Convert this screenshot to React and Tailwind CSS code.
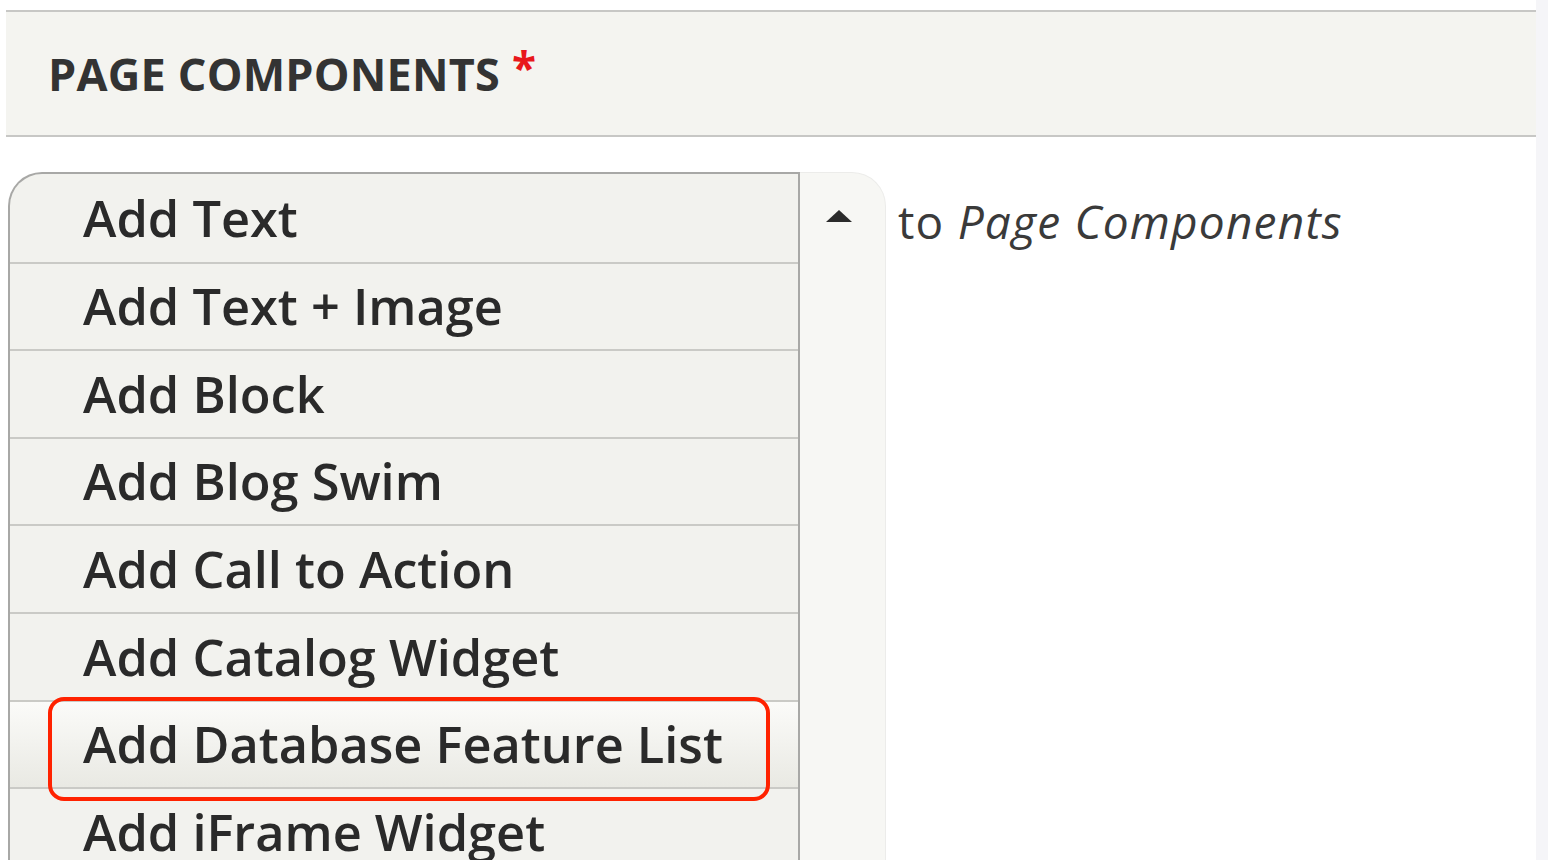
const items = [
  'Add Text',
  'Add Text + Image',
  'Add Block',
  'Add Blog Swim',
  'Add Call to Action',
  'Add Catalog Widget',
  'Add Database Feature List',
  'Add iFrame Widget',
];

function DropButton() {
  return (
    <div className="relative flex">
      <ul className="w-[792px] overflow-hidden rounded-tl-[34px] border-l-2 border-r-2 border-t-2 border-[#a8a8a6] bg-[#f2f2ee]">
        {items.map((label, i) => (
          <li
            key={label}
            className={`flex h-[87.6px] items-center pl-[73px] text-[50.5px] font-semibold leading-none text-[#2a2a2a] ${
              i > 0 ? 'border-t-2 border-[#cacac6]' : ''
            } ${i === 6 ? 'bg-gradient-to-b from-[#fbfbf9] to-[#e9e9e3]' : ''}`}
          >
            {label}
          </li>
        ))}
      </ul>
      <div className="flex w-[86px] justify-center rounded-tr-[34px] border-r border-t border-[#ececea] bg-[#f7f7f4] pl-0 pr-[8px] pt-[37px]">
        <div className="h-0 w-0 border-x-[13px] border-b-[12px] border-x-transparent border-b-[#2b2b2b]" />
      </div>
      <div className="pointer-events-none absolute left-[40px] top-[525px] h-[104px] w-[722px] rounded-[16px] border-4 border-[#ff2200]" />
    </div>
  );
}

export default function App() {
  return (
    <div className="flex h-[860px] overflow-hidden bg-white font-['Open_Sans',sans-serif]">
      <div className="flex-1 pl-[6px] pt-[10px]">
        <div className="flex h-[127px] items-center border-y-2 border-[#c7c7c5] bg-[#f4f4f0] pl-[42px]">
          <span className="text-[45px] font-bold tracking-[0.2px] text-[#333]">PAGE COMPONENTS</span>
          <span className="-mt-[14px] ml-[12px] text-[44px] font-bold text-[#e8171b]">*</span>
        </div>
        <div className="mt-[35px] flex pl-[2px]">
          <DropButton />
          <p className="ml-[12px] mt-[26px] text-[46px] leading-none tracking-[1.2px] text-[#3a3a3a]">
            to <em>Page Components</em>
          </p>
        </div>
      </div>
      <div className="w-[12px] bg-[#f5f5f8]" />
    </div>
  );
}
